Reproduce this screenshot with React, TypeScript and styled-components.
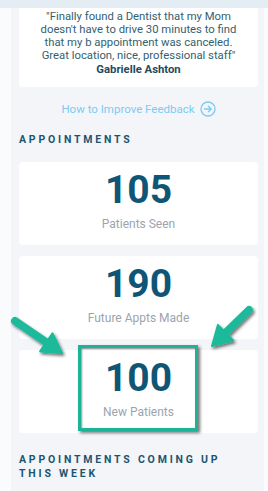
import React from "react";
import styled, { createGlobalStyle } from "styled-components";

const Global = createGlobalStyle`
  html, body { margin: 0; padding: 0; background: #fafbfd; }
  body { font-family: Roboto, "Noto Sans", "Liberation Sans", sans-serif; }
  * { box-sizing: border-box; }
`;

const Page = styled.div`
  position: relative;
  width: 268px;
  height: 491px;
  overflow: hidden;
`;

const TopBar = styled.div`
  height: 8px;
  background: #e3edf3;
`;

const Panel = styled.div`
  margin: 0 4px 0 11px;
  padding: 0 6px 30px 8px;
  background: #f4f5f9;
  display: flex;
  flex-direction: column;
`;

const ReviewCard = styled.div`
  background: #fff;
  border-radius: 0 0 4px 4px;
  padding: 2px 4px 11px;
  text-align: center;
  color: #33606f;
  font-size: 11.3px;
  line-height: 13px;
  white-space: nowrap;
`;

const Author = styled.div`
  font-weight: 700;
  color: #1f4a5c;
  margin-top: 1px;
`;

const LinkRow = styled.a`
  margin-top: 14px;
  display: flex;
  align-items: center;
  justify-content: center;
  gap: 5px;
  color: #7ccbf1;
  font-size: 11.5px;
  line-height: 16px;
  text-decoration: none;
`;

const SectionTitle = styled.h2<{ $top: number }>`
  margin: ${(p) => p.$top}px 0 0;
  font-size: 10.5px;
  line-height: 14px;
  font-weight: 700;
  letter-spacing: 2.8px;
  color: #1b5670;
  text-transform: uppercase;
`;

const Stats = styled.div`
  margin-top: 15px;
  display: flex;
  flex-direction: column;
  gap: 11px;
`;

const StatCard = styled.div`
  position: relative;
  height: 83px;
  background: #fff;
  border-radius: 4px;
  display: flex;
  flex-direction: column;
  align-items: center;
  padding-top: 6px;
`;

const Number = styled.div`
  font-size: 39px;
  line-height: 44px;
  font-weight: 700;
  color: #0f5676;
`;

const Label = styled.div`
  margin-top: 5px;
  font-size: 12px;
  line-height: 14px;
  color: #9ca4ae;
`;

const Highlight = styled.div`
  position: absolute;
  left: 59px;
  top: -5px;
  width: 120px;
  height: 86px;
  border: 3px solid #1db396;
  box-shadow: 2px 2px 3px rgba(0, 0, 0, 0.55), inset 1px 1px 2px rgba(0, 0, 0, 0.45);
  pointer-events: none;
`;

const Overlay = styled.svg`
  position: absolute;
  left: 0;
  top: 0;
  pointer-events: none;
`;

const ArrowIcon = () => (
  <svg width="16" height="16" viewBox="0 0 16 16" fill="none" stroke="#7ccbf1" strokeWidth="1.3" strokeLinecap="round" strokeLinejoin="round">
    <circle cx="8" cy="8" r="7" />
    <path d="M4.6 8h6.6M8.4 5.2L11.2 8l-2.8 2.8" />
  </svg>
);

const Arrow = ({ tail, tip }: { tail: [number, number]; tip: [number, number] }) => {
  const dx = tip[0] - tail[0];
  const dy = tip[1] - tail[1];
  const len = Math.hypot(dx, dy);
  const ux = dx / len;
  const uy = dy / len;
  const px = -uy;
  const py = ux;
  const headLen = 19;
  const headW = 11;
  const bx = tip[0] - headLen * ux;
  const by = tip[1] - headLen * uy;
  const sx = bx + 3 * ux;
  const sy = by + 3 * uy;
  const pts = `${tip[0]},${tip[1]} ${bx + headW * px},${by + headW * py} ${bx - headW * px},${by - headW * py}`;
  return (
    <g filter="url(#sh)">
      <line x1={tail[0]} y1={tail[1]} x2={sx} y2={sy} stroke="#1db99b" strokeWidth="8" strokeLinecap="round" />
      <polygon points={pts} fill="#1db99b" stroke="#1db99b" strokeWidth="2" strokeLinejoin="round" />
    </g>
  );
};

export default function App() {
  return (
    <>
      <Global />
      <Page>
        <TopBar />
        <Panel>
          <ReviewCard>
            "Finally found a Dentist that my Mom
            <br />
            doesn't have to drive 30 minutes to find
            <br />
            that my b appointment was canceled.
            <br />
            Great location, nice, professional staff"
            <Author>Gabrielle Ashton</Author>
          </ReviewCard>
          <LinkRow>
            How to Improve Feedback <ArrowIcon />
          </LinkRow>
          <SectionTitle $top={16}>Appointments</SectionTitle>
          <Stats>
            <StatCard>
              <Number>105</Number>
              <Label>Patients Seen</Label>
            </StatCard>
            <StatCard>
              <Number>190</Number>
              <Label>Future Appts Made</Label>
            </StatCard>
            <StatCard>
              <Highlight />
              <Number>100</Number>
              <Label>New Patients</Label>
            </StatCard>
          </Stats>
          <SectionTitle $top={20}>Appointments coming up this week</SectionTitle>
        </Panel>
        <Overlay width="268" height="491" viewBox="0 0 268 491">
          <defs>
            <filter id="sh" x="-20%" y="-20%" width="140%" height="140%">
              <feDropShadow dx="1.5" dy="2" stdDeviation="1.5" floodColor="#000" floodOpacity="0.55" />
            </filter>
          </defs>
          <Arrow tail={[15, 321]} tip={[62, 353]} />
          <Arrow tail={[249, 310]} tip={[212, 346]} />
        </Overlay>
      </Page>
    </>
  );
}
